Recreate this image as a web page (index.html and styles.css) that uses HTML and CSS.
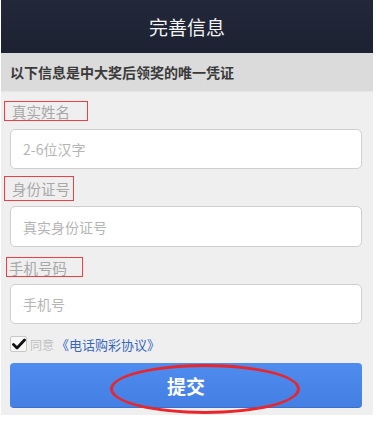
FILE: index.html
```html
<!DOCTYPE html>
<html lang="zh-CN">
<head>
<meta charset="utf-8">
<title>完善信息</title>
<link rel="stylesheet" href="styles.css">
</head>
<body>
<div class="page">
  <div class="header">完善信息</div>
  <div class="notice">以下信息是中大奖后领奖的唯一凭证</div>
  <div class="form">
    <div class="label label-name"><span>真实姓名</span></div>
    <input class="input input-name" type="text" placeholder="2-6位汉字">
    <div class="label label-id"><span>身份证号</span></div>
    <input class="input input-id" type="text" placeholder="真实身份证号">
    <div class="label label-phone"><span>手机号码</span></div>
    <input class="input input-phone" type="text" placeholder="手机号">
    <div class="agree">
      <span class="check">
        <svg width="14" height="12" viewBox="0 0 14 12"><path d="M1.5 6.5 L5 10 L12.5 2" fill="none" stroke="#111" stroke-width="2.8" stroke-linecap="round" stroke-linejoin="round"/></svg>
      </span>
      <span class="agree-text">同意</span>
      <span class="agree-link">《电话购彩协议》</span>
    </div>
    <div class="submit">
      <span class="submit-text">提交</span>
      <span class="mark"></span>
    </div>
  </div>
</div>
</body>
</html>
```

FILE: styles.css
```css
html, body {
  margin: 0;
  padding: 0;
  background: #ffffff;
}
body {
  font-family: "Noto Sans CJK SC", "Noto Sans", "Liberation Sans", sans-serif;
}
.page {
  width: 372px;
  margin-left: 1px;
  background: #efefef;
  padding-bottom: 7px;
}
.header {
  height: 53px;
  background: linear-gradient(#222839, #1d2233);
  color: #f4f4f4;
  font-size: 19px;
  display: flex;
  align-items: center;
  justify-content: center;
}
.notice {
  height: 38px;
  background: #dbdbdb;
  border-bottom: 1px solid #e6e6e6;
  padding-left: 9px;
  display: flex;
  align-items: center;
  font-size: 14px;
  font-weight: bold;
  color: #3a3a3a;
}
.form {
  display: flex;
  flex-direction: column;
  align-items: flex-start;
}
.label {
  box-sizing: border-box;
  border: 1.5px solid #ee3f45;
  color: #a8a8a8;
  font-size: 14.5px;
  display: flex;
  align-items: center;
  height: 20px;
}
.label-name {
  margin-top: 9px;
  margin-left: 3px;
  width: 84px;
  padding-left: 7px;
}
.label-id {
  margin-top: 7px;
  margin-left: 3px;
  width: 70px;
  height: 25px;
  padding-left: 7px;
}
.label-phone {
  margin-top: 10px;
  margin-left: 5px;
  width: 77px;
  padding-left: 2px;
}
.input {
  box-sizing: border-box;
  width: 352px;
  margin-left: 9px;
  height: 40px;
  border: 1px solid #cfcfcf;
  border-radius: 5px;
  background: #ffffff;
  padding: 0 12px;
  font-family: inherit;
  font-size: 14px;
  color: #333;
  outline: none;
}
.input::placeholder {
  color: #b5b5b5;
}
.input-name { margin-top: 8px; }
.input-id { margin-top: 5px; height: 41px; }
.input-phone { margin-top: 7px; }
.agree {
  margin-top: 12px;
  margin-left: 9px;
  height: 16px;
  display: flex;
  align-items: center;
  font-size: 12px;
}
.check {
  box-sizing: border-box;
  width: 17px;
  height: 16px;
  border: 1px solid #c8c8c8;
  border-radius: 2px;
  background: #f8f8f8;
  display: flex;
  align-items: center;
  justify-content: center;
}
.agree-text {
  margin-left: 3px;
  color: #c0c0c0;
}
.agree-link {
  margin-left: 2px;
  color: #3666bf;
  font-size: 13px;
}
.submit {
  position: relative;
  margin-top: 11px;
  margin-left: 9px;
  width: 352px;
  height: 45px;
  border-radius: 4px;
  background: linear-gradient(#4f8cf0, #447fe3);
  border-bottom: 1px solid #3b70cc;
  box-sizing: border-box;
  display: flex;
  align-items: center;
  justify-content: center;
}
.submit-text {
  color: #ffffff;
  font-size: 19px;
  font-weight: bold;
}
.mark {
  position: absolute;
  left: 100px;
  top: 1px;
  width: 190px;
  height: 50px;
  box-sizing: border-box;
  border: 3px solid #e8262c;
  border-radius: 50%;
}
```
